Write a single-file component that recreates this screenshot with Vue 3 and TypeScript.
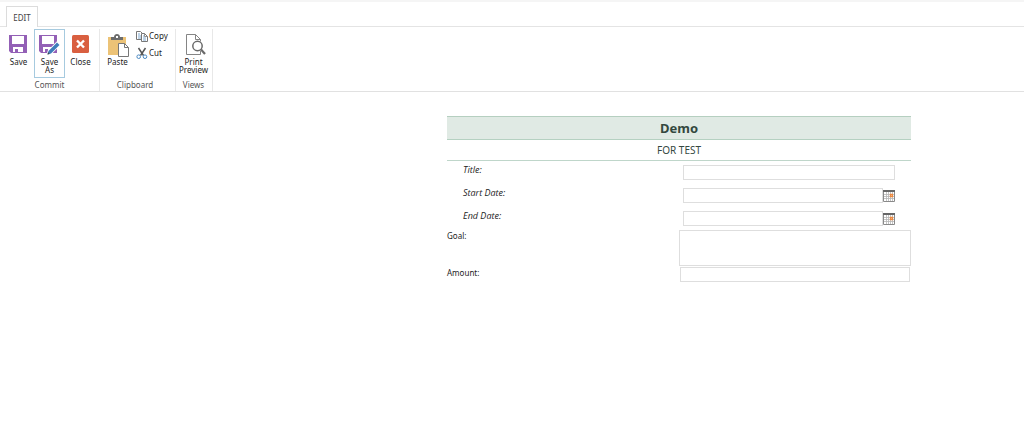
<script setup lang="ts">
import { ref } from 'vue'

const title = ref('')
const startDate = ref('')
const endDate = ref('')
const goal = ref('')
const amount = ref('')
</script>

<template>
  <div class="page">
    <header>
      <nav class="tabs">
        <button class="tab" type="button">EDIT</button>
      </nav>
      <div class="ribbon">
        <section class="group commit">
          <div class="tools">
            <button class="tool" type="button">
              <svg width="19" height="22" viewBox="0 0 19 22">
                <path d="M0 0h18v18H2l-2-2z" fill="#9360b6" />
                <path d="M3 1h12v8H3z" fill="#fff" />
                <path d="M4 12h10v5H4z" fill="#fff" />
                <path d="M6 14h3v4H6z" fill="#9360b6" />
              </svg>
              <span>Save</span>
            </button>
            <button class="tool active" type="button">
              <svg width="21" height="22" viewBox="0 0 21 22">
                <path d="M0 0h18v18H2l-2-2z" fill="#9360b6" />
                <path d="M3 1h12v8H3z" fill="#fff" />
                <path d="M4 12h10v5H4z" fill="#fff" />
                <path d="M6 14h3v4H6z" fill="#9360b6" />
                <path d="M8.500 19.500l1-3.500 8.500-8.500 2.500 2.500-8.500 8.500z" fill="#3f7dbb" stroke="#fff" stroke-width="1.600" paint-order="stroke" />
                <path d="M8.500 19.500l.6-2.200 1.600 1.600z" fill="#444" />
              </svg>
              <span>Save<br>As</span>
            </button>
            <button class="tool" type="button">
              <svg width="17" height="22" viewBox="0 0 17 22">
                <rect width="17" height="18" rx="1.500" fill="#d95f40" />
                <path d="M5 5.500l7 7M12 5.500l-7 7" stroke="#fff" stroke-width="2.400" />
              </svg>
              <span>Close</span>
            </button>
          </div>
          <h2>Commit</h2>
        </section>
        <section class="group clipboard">
          <div class="tools">
            <button class="tool" type="button">
              <svg class="paste" width="21" height="22" viewBox="0 1 21 22">
                <path d="M0 3h18v18H0z" fill="#ecc377" />
                <path d="M3 6V3h3c0-4 6-4 6 0h3v3z" fill="#6c6c6c" />
                <path d="M8 2h2v2H8z" fill="#fff" />
                <path d="M10.500 9.500h6l4 4v9h-10z" fill="#fff" stroke="#777" />
                <path d="M16.500 9.500v4h4" fill="none" stroke="#777" />
              </svg>
              <span>Paste</span>
            </button>
            <div class="stack">
              <button class="small" type="button">
                <svg width="12" height="11" viewBox="0 0 12 11">
                  <path d="M.5.5h4l2 2v6h-6z" fill="#fff" stroke="#777" />
                  <path d="M2 3h2M2 5h3M2 7h3" stroke="#5b91c2" stroke-width=".8" />
                  <path d="M5.500 2.500h3l3 3v5h-6z" fill="#fff" stroke="#777" />
                  <path d="M8.500 2.500v3h3" fill="none" stroke="#777" stroke-width=".8" />
                  <path d="M7 5h1M7 7h3M7 9h3" stroke="#5b91c2" stroke-width=".8" />
                </svg>
                <span>Copy</span>
              </button>
              <button class="small" type="button">
                <svg width="12" height="11" viewBox="0 0 12 11">
                  <path d="M2.500 0l5 7.500M9.500 0l-5 7.500" stroke="#555" stroke-width="1.500" />
                  <circle cx="2.700" cy="8.700" r="1.800" fill="none" stroke="#4c8ac2" />
                  <circle cx="9" cy="8.700" r="1.800" fill="none" stroke="#4c8ac2" />
                </svg>
                <span>Cut</span>
              </button>
            </div>
          </div>
          <h2>Clipboard</h2>
        </section>
        <section class="group views">
          <div class="tools">
            <button class="tool" type="button">
              <svg class="preview" width="20" height="22" viewBox="0 1 20 22">
                <path d="M14.500 17v3.500H.5V.5h9l5 5v2" fill="#fff" stroke="#858585" />
                <path d="M9.500.5v5h5" fill="none" stroke="#858585" />
                <circle cx="11.500" cy="12" r="4.700" fill="#fff" stroke="#6a6a6a" stroke-width="1.500" />
                <path d="M15 15.500l4 4.500" stroke="#6a6a6a" stroke-width="2.200" />
              </svg>
              <span>Print<br>Preview</span>
            </button>
          </div>
          <h2>Views</h2>
        </section>
      </div>
    </header>

    <main>
      <form @submit.prevent>
        <h1>Demo</h1>
        <p class="subtitle">FOR TEST</p>
        <div class="fields">
          <div class="row">
            <label for="title">Title:</label>
            <div class="field"><input id="title" v-model="title" type="text"></div>
          </div>
          <div class="row">
            <label for="start">Start Date:</label>
            <div class="field">
              <input id="start" v-model="startDate" type="text">
              <button class="picker" type="button" aria-label="Choose start date">
                <svg width="12" height="12" viewBox="0 0 12 12">
                  <path d="M.5.500h11v11H.5z" fill="#fff" stroke="#8a8a8a" />
                  <path d="M3.500 2v9M5.500 2v9M7.500 2v9M9.500 2v9M1 4.500h10M1 6.500h10M1 8.500h10" stroke="#b5b5b5" stroke-width=".8" />
                  <path d="M0 0h12v2H0z" fill="#666" />
                  <path d="M7.500 4.500h2v2h-2z" fill="#fff" stroke="#ed8a40" stroke-width="1.300" />
                </svg>
              </button>
            </div>
          </div>
          <div class="row">
            <label for="end">End Date:</label>
            <div class="field">
              <input id="end" v-model="endDate" type="text">
              <button class="picker" type="button" aria-label="Choose end date">
                <svg width="12" height="12" viewBox="0 0 12 12">
                  <path d="M.5.500h11v11H.5z" fill="#fff" stroke="#8a8a8a" />
                  <path d="M3.500 2v9M5.500 2v9M7.500 2v9M9.500 2v9M1 4.500h10M1 6.500h10M1 8.500h10" stroke="#b5b5b5" stroke-width=".8" />
                  <path d="M0 0h12v2H0z" fill="#666" />
                  <path d="M7.500 4.500h2v2h-2z" fill="#fff" stroke="#ed8a40" stroke-width="1.300" />
                </svg>
              </button>
            </div>
          </div>
        </div>
        <div class="fields wide">
          <div class="row">
            <label for="goal">Goal:</label>
            <div class="field"><textarea id="goal" v-model="goal"></textarea></div>
          </div>
          <div class="row">
            <label for="amount">Amount:</label>
            <div class="field amount"><input id="amount" v-model="amount" type="text"></div>
          </div>
        </div>
      </form>
    </main>
  </div>
</template>

<style>
body {
  background: #fff;
}
</style>

<style scoped>
* {
  box-sizing: border-box;
}

.page {
  font-family: "Noto Sans", "Open Sans", sans-serif;
  font-size: 8px;
  line-height: 8px;
  color: #1c1c1c;
}

h1,
h2,
p {
  margin: 0;
}

button {
  margin: 0;
  padding: 0;
  border: 0;
  background: none;
  color: inherit;
  font: inherit;
}

svg {
  display: block;
  flex: none;
  overflow: visible;
}

.tabs {
  display: flex;
  padding: 4px 6px 0;
  border-top: 2px solid #f5f5f5;
  border-bottom: 1px solid #e4e4e4;
}

.tab {
  width: 32px;
  height: 21px;
  margin-bottom: -1px;
  padding-top: 2px;
  border: 1px solid #dcdcdc;
  border-bottom: 0;
  background: #fff;
  color: #444;
}

.ribbon {
  display: flex;
  padding-top: 2px;
  border-bottom: 1px solid #e1e1e1;
}

.group {
  display: flex;
  flex-direction: column;
  border-right: 1px solid #e8e8e8;
}

.group h2 {
  padding: 3px 0 2px;
  color: #555;
  font-size: 8px;
  font-weight: 400;
  text-align: center;
}

.tools {
  display: flex;
  height: 49px;
}

.commit {
  padding: 0 3px;
}

.clipboard {
  padding: 0 7px 0 2px;
}

.views {
  padding: 0 3px 0 2px;
}

.tool {
  display: flex;
  flex-direction: column;
  align-items: center;
  justify-content: space-between;
  width: 31px;
  padding: 5px 0 3px;
  border: 1px solid transparent;
}

.tool span {
  min-height: 16px;
  white-space: nowrap;
}

.active {
  border-color: #a6cadf;
}

.paste {
  margin-left: 2px;
}

.preview {
  margin-left: 4px;
}

.stack {
  display: flex;
  flex-direction: column;
  gap: 6px;
  width: 35px;
  padding: 2px 0 0 3px;
}

.small {
  display: flex;
  align-items: center;
  gap: 1px;
}

.small span {
  padding-bottom: 1px;
}

main {
  padding: 24px 113px 24px 447px;
}

h1 {
  border-top: 1px solid #b5cfc0;
  border-bottom: 1px solid #b5d1c1;
  background: #e0eae4;
  color: #33483e;
  font-size: 13px;
  line-height: 22px;
  text-align: center;
}

.subtitle {
  border-bottom: 1px solid #bfd6ca;
  color: #35483f;
  font-size: 10px;
  line-height: 20px;
  text-align: center;
}

.fields {
  display: grid;
  row-gap: 8px;
  padding: 4px 16px;
  font-family: "Open Sans", "Noto Sans", sans-serif;
  font-size: 9px;
  font-style: italic;
}

.row {
  display: grid;
  grid-template-columns: 220px 1fr;
}

.row label {
  padding-top: 1px;
}

.wide {
  row-gap: 1px;
  padding: 0;
  font-family: "Noto Sans", "Open Sans", sans-serif;
  font-size: 8px;
  font-style: normal;
}

.wide .row {
  grid-template-columns: 1fr 1fr;
}

.wide label {
  padding-top: 2px;
}

.field {
  display: flex;
  align-items: center;
}

.amount {
  padding: 0 1px;
}

input,
textarea {
  display: block;
  flex: 1;
  min-width: 0;
  height: 15px;
  margin: 0;
  padding: 1px 3px;
  border: 1px solid #dedede;
  background: #fff;
  color: inherit;
  font: inherit;
}

textarea {
  height: 36px;
  resize: none;
}
</style>
